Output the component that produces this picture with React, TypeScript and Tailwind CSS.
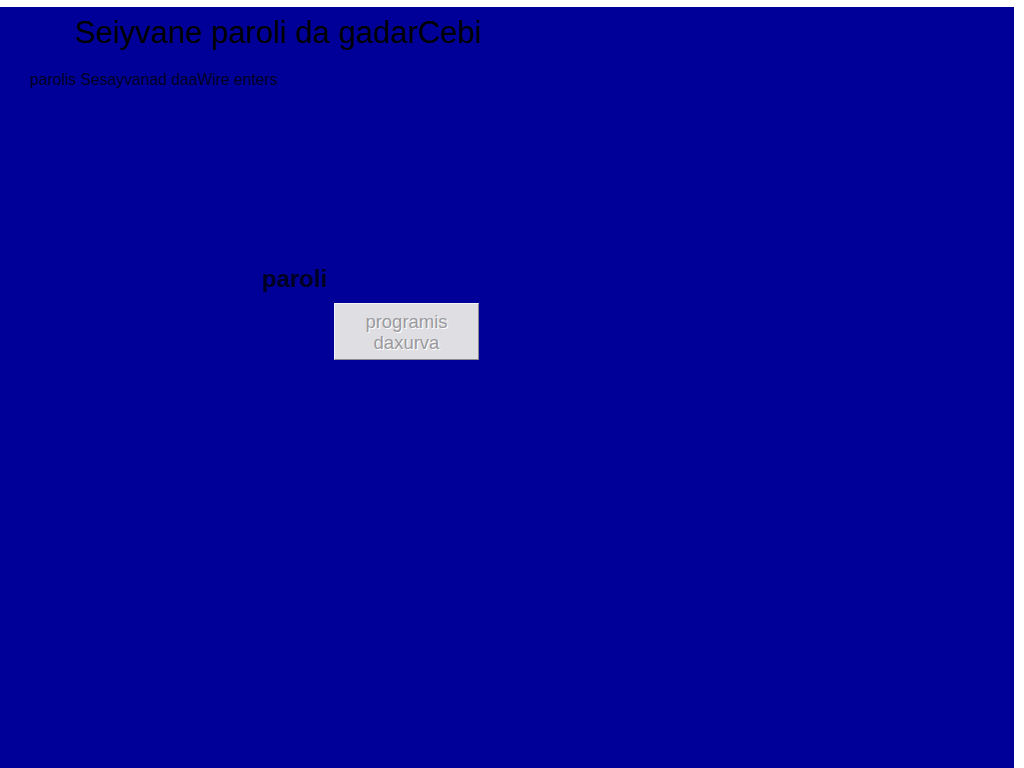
export default function App() {
  return (
    <div className="min-h-screen bg-white pt-[7px] pr-[10px]" style={{ fontFamily: '"Liberation Sans", Arial, sans-serif' }}>
      <div className="h-[761px] bg-[#000099] flex flex-col items-start">
        <h1 className="ml-[75px] mt-[8px] text-[31px] leading-[36px] font-normal text-black">
          Seiyvane paroli da gadarCebi
        </h1>
        <p className="ml-[30px] mt-[20px] text-[15.7px] leading-[18px] text-[#000022]">
          parolis Sesayvanad daaWire enters
        </p>
        <h2 className="ml-[262px] mt-[176px] text-[24px] leading-[28px] font-bold text-[#000022]">
          paroli
        </h2>
        <button
          disabled
          className="ml-[334px] mt-[10px] w-[145px] h-[57px] bg-[#dfdfe3] border border-t-[#f4f4f6] border-l-[#f4f4f6] border-b-[#8a8a90] border-r-[#8a8a90] text-[18.5px] leading-[21px] text-[#9a9a9e] [text-shadow:1px_1px_0_#ffffff] flex flex-col items-center justify-center"
        >
          <span>programis</span>
          <span>daxurva</span>
        </button>
      </div>
    </div>
  );
}
